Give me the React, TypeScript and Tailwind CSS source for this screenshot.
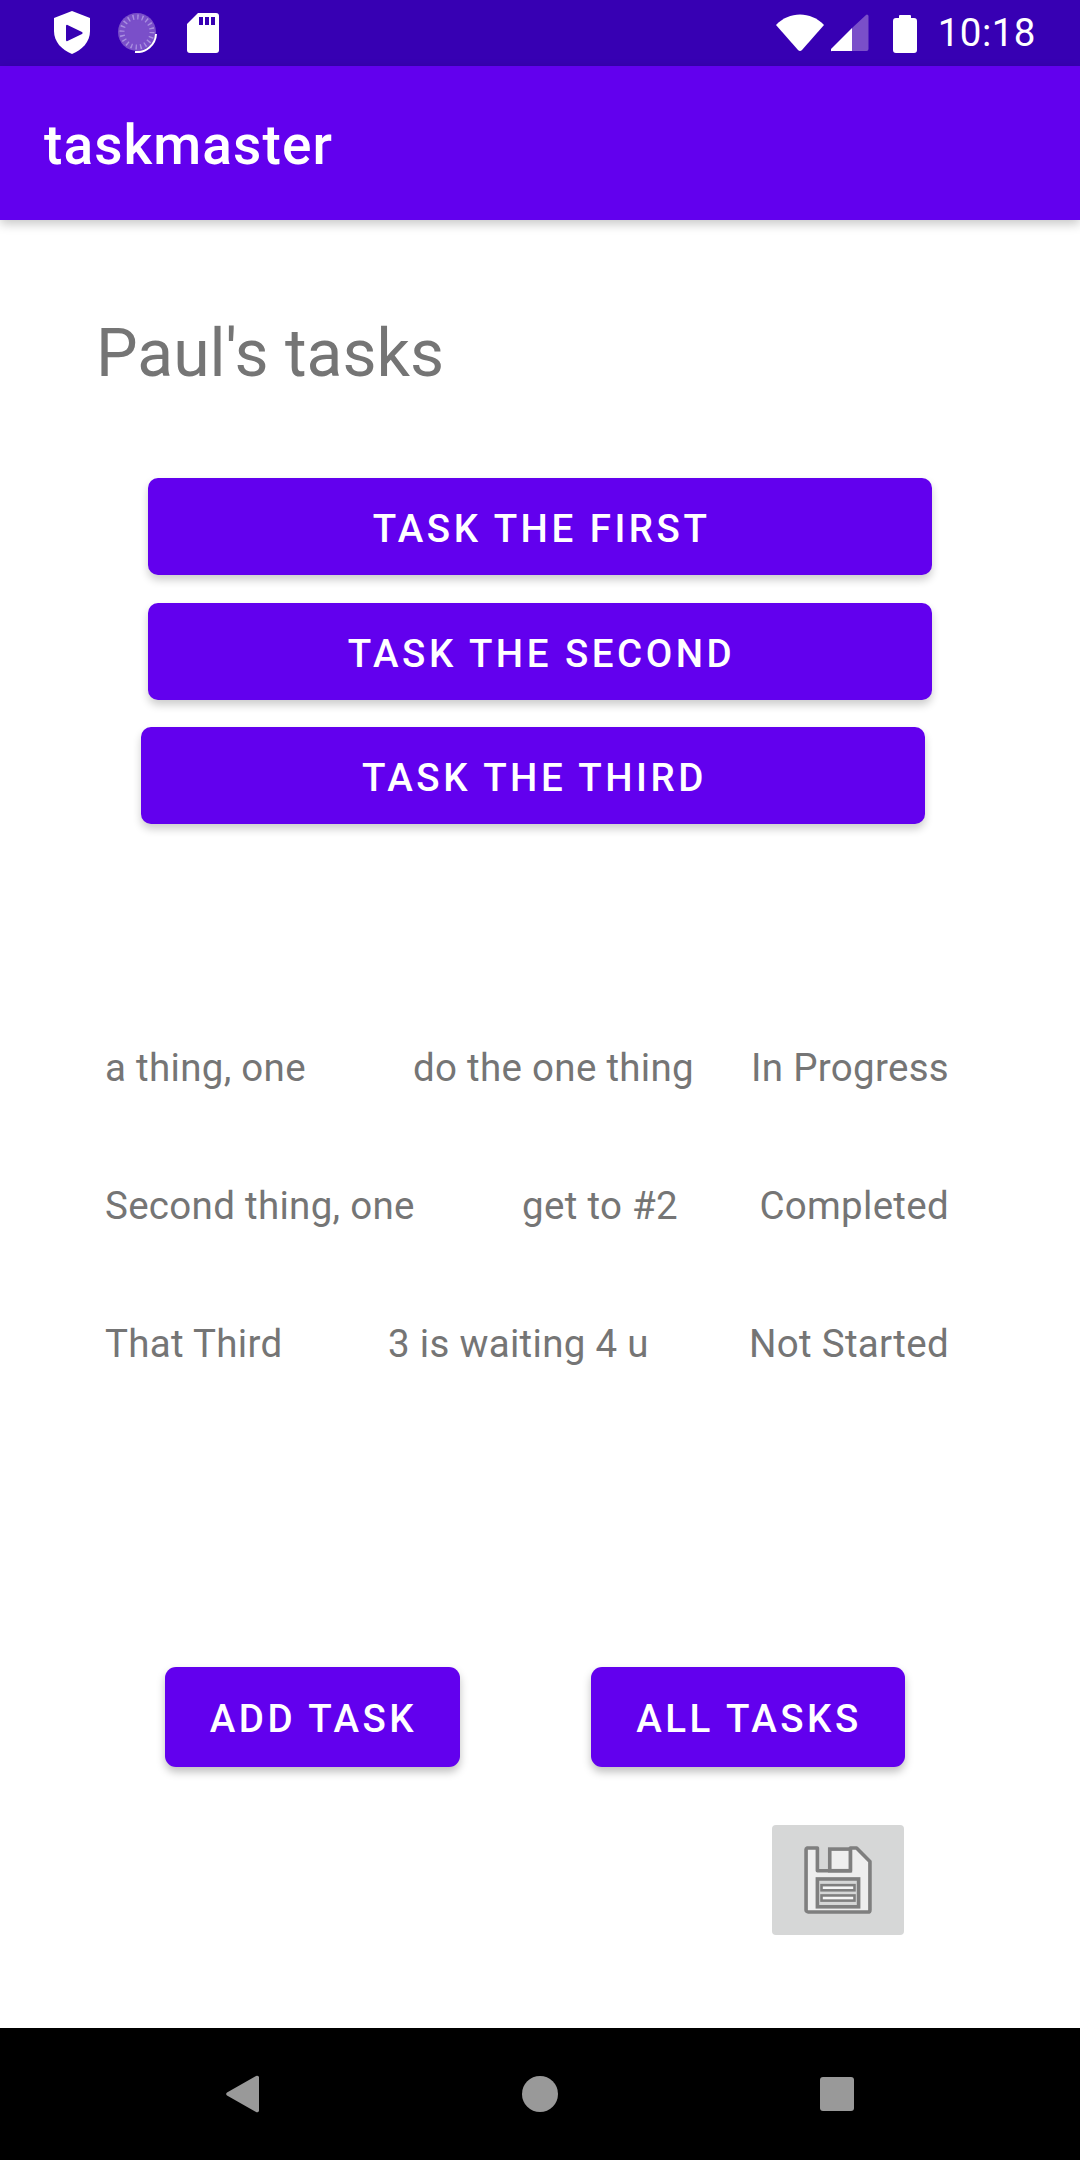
const PURPLE = "bg-[#6200ee]";

function StatusBar() {
  return (
    <div className="flex h-[66px] items-center justify-between bg-[#3700b3] pl-[54px] pr-[44px] text-white">
      <div className="flex items-center">
        <svg width="36" height="44" viewBox="0 0 36 44" className="mt-[-1px]">
          <path d="M18 0 L36 7 V20 C36 31 28 39 18 43 C8 39 0 31 0 20 V7 Z" fill="#fff" />
          <path d="M12 15 a1 1 0 0 1 1.5 -1 L28 21 a1.2 1.2 0 0 1 0 2 L13.5 30 a1 1 0 0 1 -1.5 -1 Z" fill="#3700b3" />
        </svg>
        <svg width="40" height="40" viewBox="0 0 40 40" className="ml-[28px]">
          <circle cx="19" cy="19" r="19" fill="#7a4fc9" />
          <path d="M38 21 A19 19 0 0 1 17 39" stroke="#fff" strokeWidth="2" fill="none" />
          <circle cx="19" cy="19" r="15" fill="none" stroke="#a98fe0" strokeWidth="5" strokeDasharray="1.4 3.3" />
          <circle cx="19" cy="19" r="12" fill="#7a4fc9" />
        </svg>
        <svg width="32" height="40" viewBox="0 0 32 40" className="ml-[29px]">
          <path d="M11 0 H29 A3 3 0 0 1 32 3 V37 A3 3 0 0 1 29 40 H3 A3 3 0 0 1 0 37 V11 Z" fill="#fff" />
          <path d="M12 4 h4 v8 h-4 Z M18 4 h4 v8 h-4 Z M24 4 h4 v8 h-4 Z" fill="#3700b3" />
        </svg>
      </div>
      <div className="flex items-center">
        <svg width="48" height="38" viewBox="0 0 48 38">
          <path d="M0 11 C13 -3 35 -3 48 11 L26 36 a3 3 0 0 1 -4 0 Z" fill="#fff" />
        </svg>
        <svg width="38" height="38" viewBox="0 0 38 38" className="ml-[7px]">
          <path d="M21 14 L0 35 a1 1 0 0 0 1 2 H21 Z" fill="#fff" />
          <path d="M21 14 L35 1 a1.5 1.5 0 0 1 2.5 1 V35 a2 2 0 0 1 -2 2 H21 Z" fill="#7a4fc9" />
        </svg>
        <svg width="24" height="40" viewBox="0 0 24 40" className="ml-[24px]">
          <path d="M6 3 a1 1 0 0 1 1 -1 H17 a1 1 0 0 1 1 1 V5 H21 a3 3 0 0 1 3 3 V37 a3 3 0 0 1 -3 3 H3 a3 3 0 0 1 -3 -3 V8 a3 3 0 0 1 3 -3 H6 Z" fill="#fff" />
        </svg>
        <span className="ml-[21px] text-[38.5px] leading-none font-normal tracking-[0.5px]">10:18</span>
      </div>
    </div>
  );
}

function TaskButton({ label, className }: { label: string; className: string }) {
  return (
    <button
      className={`${PURPLE} flex h-[97px] w-[784px] items-center justify-center rounded-[10px] pt-[5px] pl-[3px] text-[38.5px] font-medium tracking-[3.5px] text-white shadow-[0_5px_8px_rgba(0,0,0,0.2)] ${className}`}
    >
      {label}
    </button>
  );
}

function ActionButton({ label, className }: { label: string; className: string }) {
  return (
    <button
      className={`${PURPLE} flex h-[100px] items-center justify-center rounded-[11px] pt-[4px] pl-[2px] text-[38.5px] font-medium tracking-[3.5px] text-white shadow-[0_5px_8px_rgba(0,0,0,0.25)] ${className}`}
    >
      {label}
    </button>
  );
}

function TaskRow({ title, body, state, bodyClass }: { title: string; body: string; state: string; bodyClass: string }) {
  return (
    <div className="flex h-[56px] items-center pl-[105px] pr-[131px] text-[38.5px] leading-none tracking-[0.3px] text-[#757575]">
      <span className="w-[283px] shrink-0 whitespace-nowrap">{title}</span>
      <span className={`whitespace-nowrap ${bodyClass}`}>{body}</span>
      <span className="ml-auto whitespace-nowrap">{state}</span>
    </div>
  );
}

export default function App() {
  return (
    <div className="flex h-[2160px] w-[1080px] flex-col overflow-hidden bg-white font-['Roboto',sans-serif]">
      <StatusBar />
      <div className={`${PURPLE} relative z-10 flex h-[154px] items-center pt-[4px] pl-[44px] text-[55px] font-medium tracking-[1.1px] text-white shadow-[0_4px_10px_rgba(0,0,0,0.22)]`}>
        taskmaster
      </div>
      <main className="flex min-h-0 flex-1 flex-col">
        <h1 className="mt-[95px] ml-[96px] text-[66px] leading-[78px] font-normal text-[#757575]">Paul's tasks</h1>
        <div className="mt-[85px] flex flex-col gap-[28px]">
          <TaskButton label="TASK THE FIRST" className="ml-[148px]" />
          <TaskButton label="TASK THE SECOND" className="ml-[148px]" />
          <TaskButton label="TASK THE THIRD" className="ml-[141px] mt-[-1px]" />
        </div>
        <div className="mt-[216px] flex flex-col gap-[82px]">
          <TaskRow title="a thing, one" body="do the one thing" state="In Progress" bodyClass="ml-[25px]" />
          <TaskRow title="Second thing, one" body="get to #2" state="Completed" bodyClass="ml-[134px]" />
          <TaskRow title="That Third" body="3 is waiting 4 u" state="Not Started" bodyClass="" />
        </div>
        <div className="mt-[295px] flex pl-[165px]">
          <ActionButton label="ADD TASK" className="w-[295px]" />
          <ActionButton label="ALL TASKS" className="ml-[131px] w-[314px]" />
        </div>
        <div className="mt-[58px] flex pl-[772px]">
          <button className="flex h-[110px] w-[132px] items-center justify-center rounded-[4px] bg-[#d6d7d7]">
            <svg width="68" height="68" viewBox="0 0 66 66">
              <path d="M3 2 H13 V24 H45 V2 H51 L64 15 V62 A2 2 0 0 1 62 64 H4 A2 2 0 0 1 2 62 V4 A2 2 0 0 1 3 2 Z" fill="#eeeeee" stroke="#7f7f7f" strokeWidth="3.5" strokeLinejoin="round" />
              <rect x="25" y="3" width="20" height="21" fill="#eeeeee" stroke="#7f7f7f" strokeWidth="3.5" />
              <rect x="13" y="32" width="40" height="27" fill="#d6d7d7" stroke="#7f7f7f" strokeWidth="3.5" />
              <rect x="17" y="38" width="32" height="5" fill="#f5f5f5" stroke="#7f7f7f" strokeWidth="2.5" />
              <rect x="17" y="48" width="32" height="5" fill="#f5f5f5" stroke="#7f7f7f" strokeWidth="2.5" />
            </svg>
          </button>
        </div>
      </main>
      <nav className="flex h-[132px] shrink-0 items-center bg-black pl-[226px]">
        <svg width="33" height="38" viewBox="0 0 33 38">
          <path d="M30 1 a2 2 0 0 1 3 2 V35 a2 2 0 0 1 -3 2 L1 20.5 a2 2 0 0 1 0 -3 Z" fill="#999999" />
        </svg>
        <div className="ml-[263px] h-[36px] w-[36px] rounded-full bg-[#999999]" />
        <div className="ml-[262px] h-[34px] w-[34px] rounded-[3px] bg-[#999999]" />
      </nav>
    </div>
  );
}
